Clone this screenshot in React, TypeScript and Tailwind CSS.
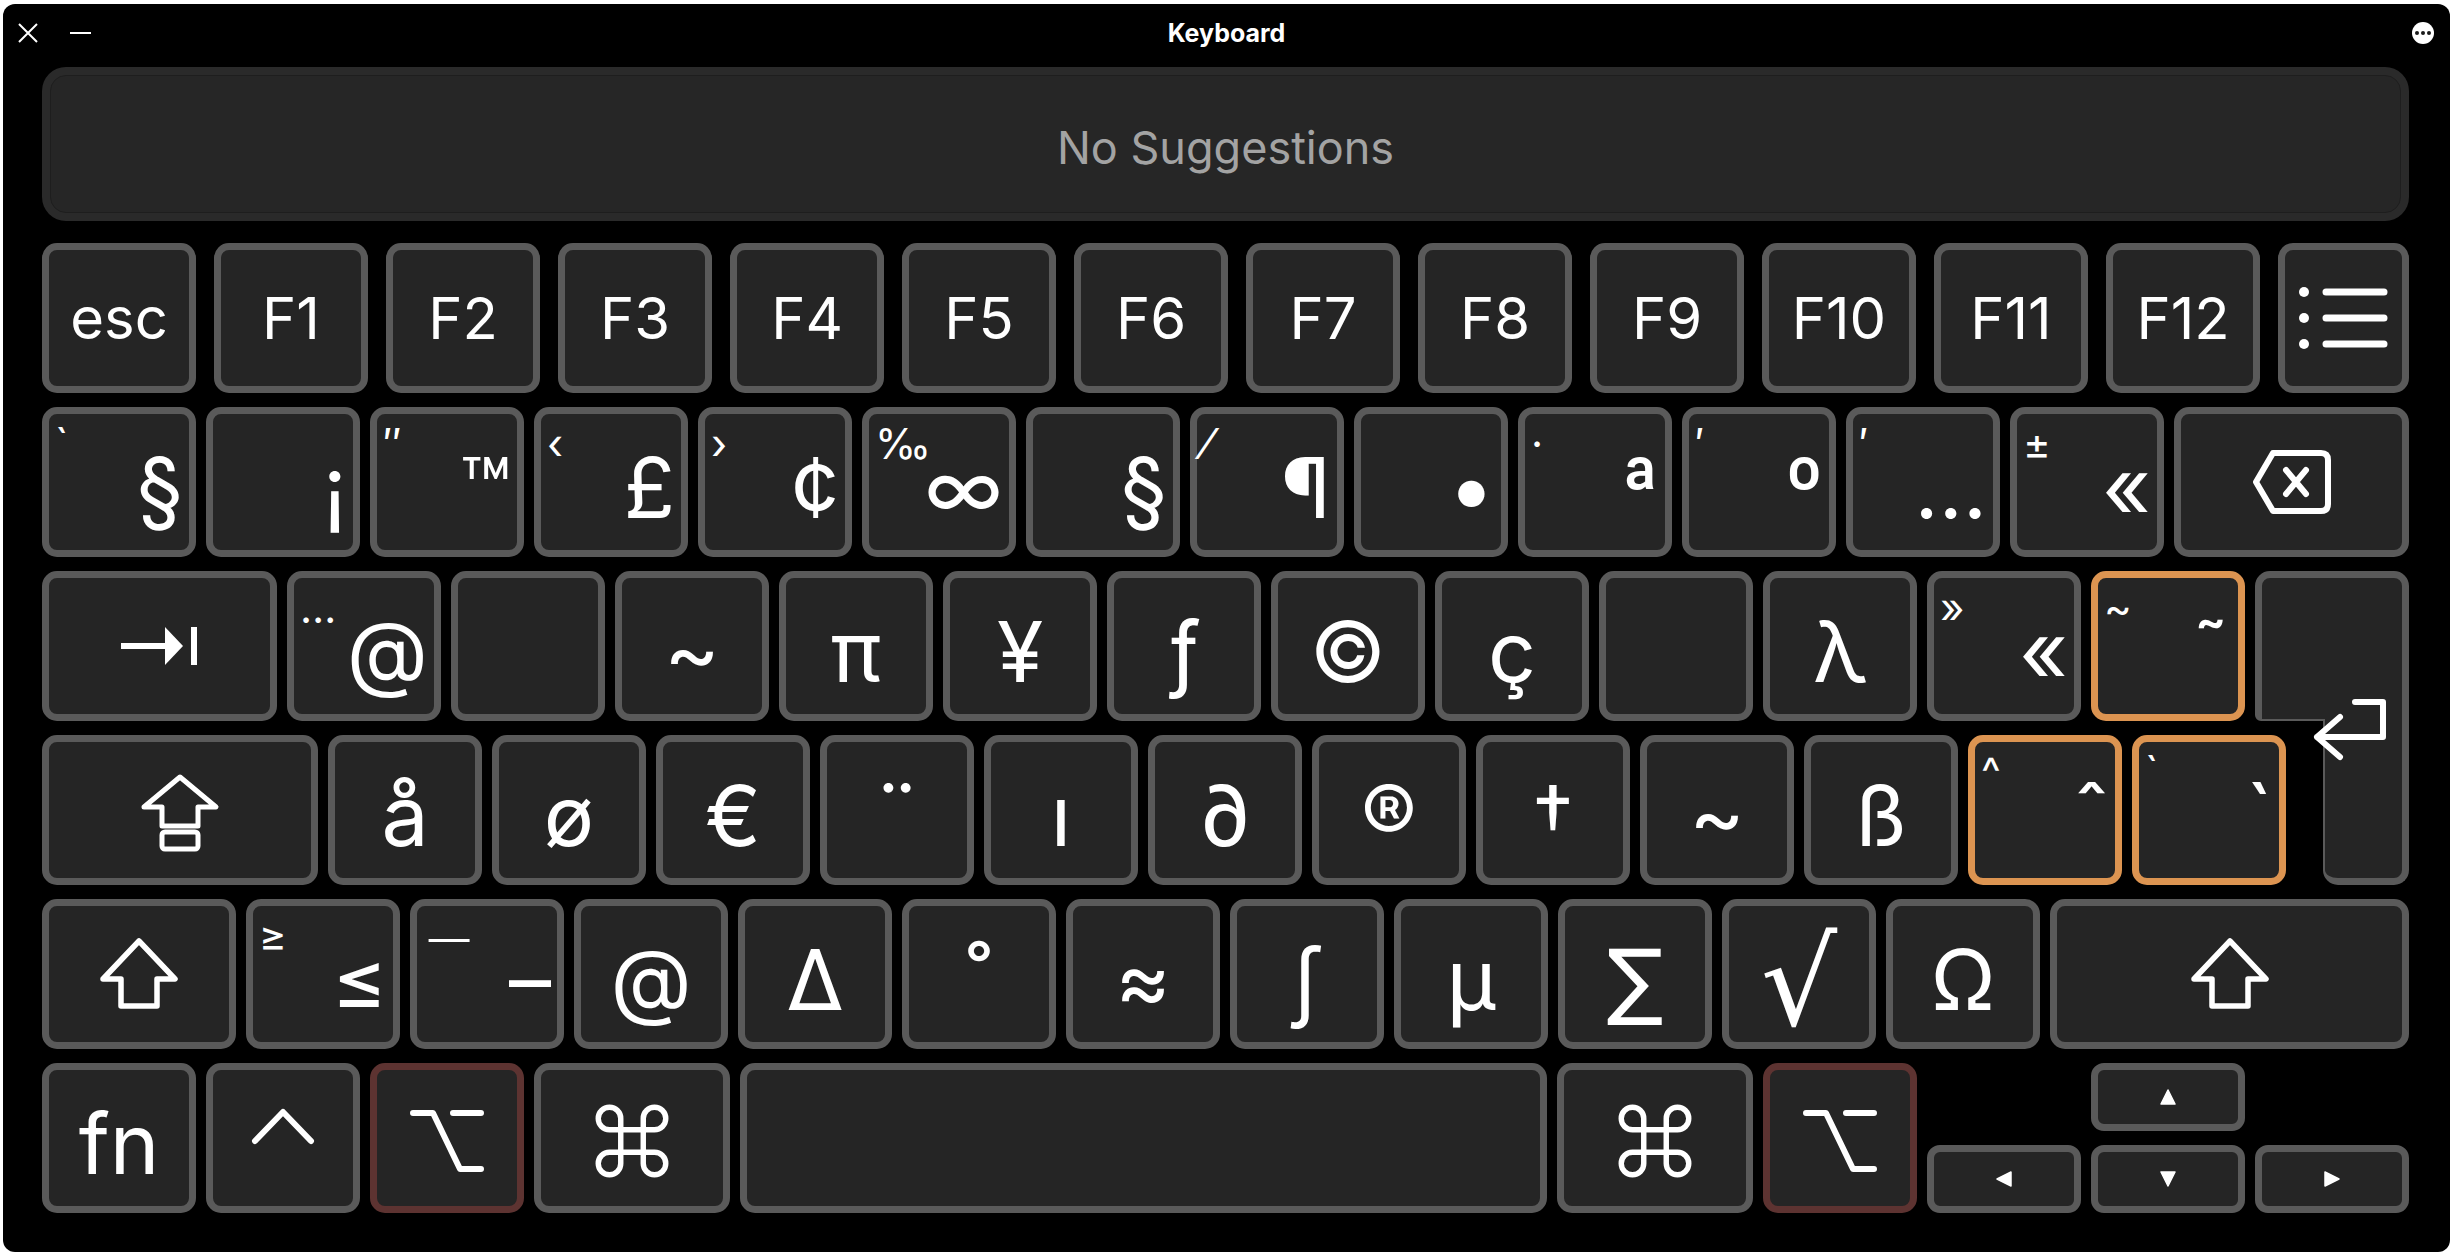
import React from 'react';

type Tone = 'plain' | 'orange' | 'red';

interface KeyProps {
  w: string;
  h?: string;
  tone?: Tone;
  round?: string;
  className?: string;
  children?: React.ReactNode;
}

function Key({ w, h = 'h-[150px]', tone = 'plain', round = 'rounded-[15px]', className = '', children }: KeyProps) {
  const border =
    tone === 'orange' ? 'border-[#dc9451]' : tone === 'red' ? 'border-[#5d3331]' : 'border-[#5a5a5a]';
  return (
    <div
      className={`grid shrink-0 grid-cols-1 grid-rows-1 border-[7px] bg-[#252525] text-white ${round} ${w} ${h} ${border} ${className}`}
    >
      {children}
    </div>
  );
}

// small shifted glyph, top-left
function Sec({ children }: { children: React.ReactNode }) {
  return (
    <span className="col-start-1 row-start-1 ml-[6px] mt-[9px] self-start justify-self-start text-[42px] leading-none">
      {children}
    </span>
  );
}

// main option glyph, sits on a shared baseline
function Main({ children, right = false, className = '' }: { children: React.ReactNode; right?: boolean; className?: string }) {
  return (
    <span
      className={`col-start-1 row-start-1 mb-[20px] self-end text-[84px] leading-none ${
        right ? 'mr-[6px] justify-self-end' : 'justify-self-center'
      } ${className}`}
    >
      {children}
    </span>
  );
}

function Mid({ children, className = '' }: { children: React.ReactNode; className?: string }) {
  return (
    <div className={`col-start-1 row-start-1 flex self-center justify-self-center ${className}`}>{children}</div>
  );
}

const stroke = { stroke: 'white', fill: 'none', strokeLinecap: 'round' as const, strokeLinejoin: 'round' as const };

const TabIcon = () => (
  <svg width="78" height="38" viewBox="0 0 78 38" fill="white">
    <rect x="0" y="16" width="46" height="6" />
    <polygon points="44,0 62,19 44,38" />
    <rect x="70" y="0" width="6" height="38" />
  </svg>
);

const CapsIcon = () => (
  <svg width="82" height="80" viewBox="0 0 82 80" {...stroke} strokeWidth="5">
    <path d="M41 4L77 34H59V53H23V34H5Z" />
    <rect x="23" y="59" width="36" height="17" rx="3" />
  </svg>
);

const ShiftIcon = () => (
  <svg width="80" height="74" viewBox="0 0 80 74" {...stroke} strokeWidth="5.5">
    <path d="M40 4L76 42H58V69H22V42H4Z" />
  </svg>
);

const BackIcon = () => (
  <svg width="80" height="64" viewBox="0 0 80 64" {...stroke} strokeWidth="6">
    <path d="M21 3H69Q76 3 76 10V54Q76 61 69 61H21L4 32Z" />
    <path d="M34 20L54 44M54 20L34 44" />
  </svg>
);

const MenuIcon = () => (
  <svg width="92" height="62" viewBox="0 0 92 62" {...stroke} strokeWidth="7">
    <circle cx="6" cy="5" r="5" fill="white" stroke="none" />
    <circle cx="6" cy="31" r="5" fill="white" stroke="none" />
    <circle cx="6" cy="57" r="5" fill="white" stroke="none" />
    <path d="M28 5H86M28 31H86M28 57H86" />
  </svg>
);

const CtrlIcon = () => (
  <svg width="64" height="38" viewBox="0 0 64 38" {...stroke} strokeWidth="6">
    <path d="M4 34L32 5L60 34" />
  </svg>
);

const OptIcon = () => (
  <svg width="74" height="66" viewBox="0 0 74 66" {...stroke} strokeWidth="6">
    <path d="M3 5H23L50 61H71M43 5H71" />
  </svg>
);

const CmdIcon = () => (
  <svg width="90" height="90" viewBox="0 0 24 24" {...stroke} strokeWidth="1.45">
    <path d="M15 6v12a3 3 0 1 0 3-3H6a3 3 0 1 0 3 3V6a3 3 0 1 0-3 3h12a3 3 0 1 0-3-3" />
  </svg>
);

const Tri = ({ points }: { points: string }) => (
  <svg width="18" height="18" viewBox="0 0 18 18" fill="white">
    <polygon points={points} strokeLinejoin="round" stroke="white" strokeWidth="1.5" />
  </svg>
);

const fnKeys = ['esc', 'F1', 'F2', 'F3', 'F4', 'F5', 'F6', 'F7', 'F8', 'F9', 'F10', 'F11', 'F12'];

const numRow: [string, string][] = [
  ['`', '§'],
  ['', '¡'],
  ['″', '™'],
  ['‹', '£'],
  ['›', '¢'],
  ['‰', '∞'],
  ['', '§'],
  ['⁄', '¶'],
  ['', '•'],
  ['·', 'ª'],
  ['′', 'º'],
  ['′', '…'],
  ['±', '«'],
];

// [secondary, main, tone]; a secondary means the main glyph sits right
const topRow: [string, string, Tone][] = [
  ['…', '@', 'plain'],
  ['', '', 'plain'],
  ['', '~', 'plain'],
  ['', 'π', 'plain'],
  ['', '¥', 'plain'],
  ['', 'ƒ', 'plain'],
  ['', '©', 'plain'],
  ['', 'ç', 'plain'],
  ['', '', 'plain'],
  ['', 'λ', 'plain'],
  ['»', '«', 'plain'],
  ['~', '˜', 'orange'],
];

const homeRow: [string, string, Tone][] = [
  ['', 'å', 'plain'],
  ['', 'ø', 'plain'],
  ['', '€', 'plain'],
  ['', '¨', 'plain'],
  ['', 'ı', 'plain'],
  ['', '∂', 'plain'],
  ['', '®', 'plain'],
  ['', '†', 'plain'],
  ['', '~', 'plain'],
  ['', 'ß', 'plain'],
  ['^', 'ˆ', 'orange'],
  ['`', '`', 'orange'],
];

const bottomRow: [string, string][] = [
  ['≥', '≤'],
  ['¯', '–'],
  ['', '@'],
  ['', '∆'],
  ['', '˚'],
  ['', '≈'],
  ['', '∫'],
  ['', 'µ'],
  ['', '∑'],
  ['', '√'],
  ['', 'Ω'],
];

function CharKey({ sec, main, tone = 'plain', forceRight = false }: { sec: string; main: string; tone?: Tone; forceRight?: boolean }) {
  // the radical is drawn much taller than the text glyphs, and drops below the baseline
  if (main === '√') {
    return (
      <Key w="w-[154px]" tone={tone}>
        <span className="col-start-1 row-start-1 -mb-[2px] self-end justify-self-center font-['DejaVu_Sans'] text-[120px] leading-none">
          √
        </span>
      </Key>
    );
  }
  return (
    <Key w="w-[154px]" tone={tone}>
      {sec && (
        <Sec>
          {sec === '¯' ? (
            <span className="-ml-[10px] inline-block origin-left translate-y-[19px] scale-x-[3.6]">¯</span>
          ) : (
            sec
          )}
        </Sec>
      )}
      {main && (
        <Main right={forceRight || !!sec} className={main === '∑' ? "font-['DejaVu_Sans']" : ''}>
          {main}
        </Main>
      )}
    </Key>
  );
}

export default function App() {
  return (
    <div className="h-[1256px] w-[2452px] overflow-hidden bg-white pl-[3px] pt-[4px] font-[Inter,'DejaVu_Sans',sans-serif]">
      <div className="flex h-[1248px] w-[2447px] flex-col rounded-[12px] bg-black">
        {/* Title bar */}
        <div className="grid h-[58px] grid-cols-[200px_1fr_200px] items-center">
          <div className="flex items-center gap-[32px] pl-[15px]">
            <svg width="20" height="20" viewBox="0 0 20 20">
              <path d="M1 1L19 19M19 1L1 19" stroke="white" strokeWidth="2" />
            </svg>
            <svg width="21" height="2" viewBox="0 0 21 2">
              <rect width="21" height="2" fill="white" />
            </svg>
          </div>
          <div className="mt-[2px] text-center text-[25px] font-bold text-white">Keyboard</div>
          <div className="flex justify-end pr-[16px]">
            <div className="flex h-[22px] w-[22px] items-center justify-center gap-[2px] rounded-full bg-white">
              <span className="h-[4px] w-[4px] rounded-full bg-[#1a1a1a]" />
              <span className="h-[4px] w-[4px] rounded-full bg-[#1a1a1a]" />
              <span className="h-[4px] w-[4px] rounded-full bg-[#1a1a1a]" />
            </div>
          </div>
        </div>

        <div className="mt-[5px] pl-[39px] pr-[41px]">
          {/* Suggestions */}
          <div className="h-[154px] rounded-[24px] bg-[#2a2a2a] p-[8px]">
            <div className="flex h-full items-center justify-center rounded-[16px] border border-[#1e1e1e] bg-[#262626]">
              <span className="mt-[6px] text-[45px] leading-none text-[#a3a3a3]">No Suggestions</span>
            </div>
          </div>

          <div className="mt-[22px] flex flex-col gap-[14px]">
            {/* Function row */}
            <div className="flex gap-[18px]">
              {fnKeys.map((k) => (
                <Key key={k} w="w-[154px]">
                  <span className="col-start-1 row-start-1 self-center justify-self-center text-[58px] leading-none">{k}</span>
                </Key>
              ))}
              <Key w="flex-1">
                <Mid>
                  <MenuIcon />
                </Mid>
              </Key>
            </div>

            {/* Number row */}
            <div className="flex gap-[10px]">
              {numRow.map(([s, m], i) => (
                <CharKey key={i} sec={s} main={m} forceRight />
              ))}
              <Key w="flex-1">
                <Mid>
                  <BackIcon />
                </Mid>
              </Key>
            </div>

            {/* Tab row */}
            <div className="flex gap-[10px]">
              <Key w="w-[235px]">
                <Mid>
                  <TabIcon />
                </Mid>
              </Key>
              {topRow.map(([s, m, t], i) => (
                <CharKey key={i} sec={s} main={m} tone={t} />
              ))}
              <div className="h-[150px] flex-1 rounded-t-[15px] rounded-bl-[6px] border-[7px] border-b-[2px] border-[#5a5a5a] bg-[#252525]" />
            </div>

            {/* Home row */}
            <div className="flex gap-[10px]">
              <Key w="w-[276px]">
                <Mid className="mt-[6px]">
                  <CapsIcon />
                </Mid>
              </Key>
              {homeRow.map(([s, m, t], i) => (
                <CharKey key={i} sec={s} main={m} tone={t} />
              ))}
              <div className="relative z-10 -mt-[16px] ml-auto h-[166px] w-[86px] rounded-b-[15px] border-[7px] border-t-0 border-l-[2px] border-[#5a5a5a] bg-[#252525]">
                <svg
                  className="absolute left-[-14px] top-[-23px]"
                  width="80"
                  height="66"
                  viewBox="0 0 80 66"
                  {...stroke}
                  strokeWidth="6"
                >
                  <path d="M29 21L6 41L29 61M6 41H72V6H44" />
                </svg>
              </div>
            </div>

            {/* Shift row */}
            <div className="flex gap-[10px]">
              <Key w="w-[194px]">
                <Mid>
                  <ShiftIcon />
                </Mid>
              </Key>
              {bottomRow.map(([s, m], i) => (
                <CharKey key={i} sec={s} main={m} />
              ))}
              <Key w="flex-1">
                <Mid>
                  <ShiftIcon />
                </Mid>
              </Key>
            </div>

            {/* Modifier row */}
            <div className="flex gap-[10px]">
              <Key w="w-[154px]">
                <Main>fn</Main>
              </Key>
              <Key w="w-[154px]">
                <Mid className="mb-[24px]">
                  <CtrlIcon />
                </Mid>
              </Key>
              <Key w="w-[154px]" tone="red">
                <Mid className="mt-[6px]">
                  <OptIcon />
                </Mid>
              </Key>
              <Key w="w-[196px]">
                <Mid className="mt-[6px]">
                  <CmdIcon />
                </Mid>
              </Key>
              <Key w="flex-1" />
              <Key w="w-[196px]">
                <Mid className="mt-[6px]">
                  <CmdIcon />
                </Mid>
              </Key>
              <Key w="w-[154px]" tone="red">
                <Mid className="mt-[6px]">
                  <OptIcon />
                </Mid>
              </Key>
              <div className="flex w-[154px] flex-col justify-end">
                <Key w="w-[154px]" h="h-[68px]" round="rounded-[13px]">
                  <Mid>
                    <Tri points="2,9 16,2 16,16" />
                  </Mid>
                </Key>
              </div>
              <div className="flex w-[154px] flex-col gap-[14px]">
                <Key w="w-[154px]" h="h-[68px]" round="rounded-[13px]">
                  <Mid>
                    <Tri points="9,2 16,16 2,16" />
                  </Mid>
                </Key>
                <Key w="w-[154px]" h="h-[68px]" round="rounded-[13px]">
                  <Mid>
                    <Tri points="2,2 16,2 9,16" />
                  </Mid>
                </Key>
              </div>
              <div className="flex w-[154px] flex-col justify-end">
                <Key w="w-[154px]" h="h-[68px]" round="rounded-[13px]">
                  <Mid>
                    <Tri points="2,2 16,9 2,16" />
                  </Mid>
                </Key>
              </div>
            </div>
          </div>
        </div>
      </div>
    </div>
  );
}
